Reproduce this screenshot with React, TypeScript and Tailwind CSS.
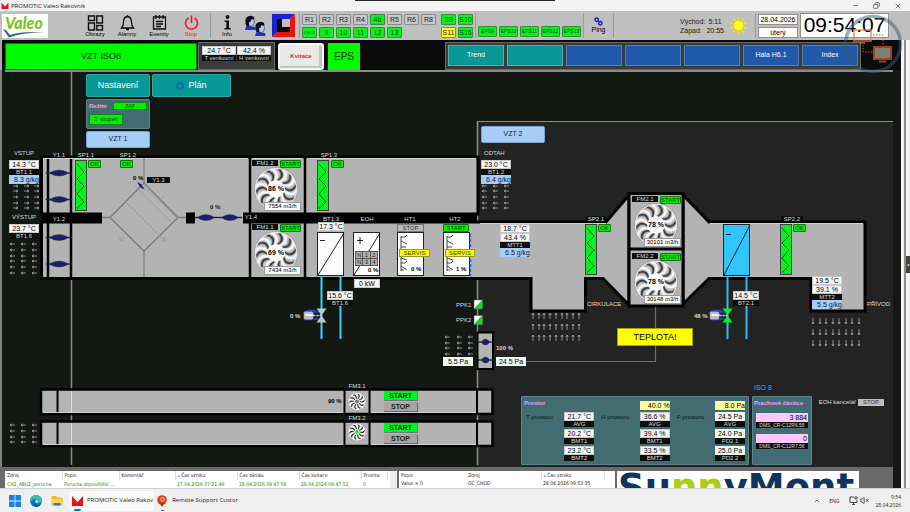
import type { ReactNode } from "react";
import clsx from "clsx";
import { ChevronUp, Copy, Minus, VolumeX, X } from "lucide-react";

type Kind = "white" | "blue" | "mint" | "yellow" | "pink" | "label";
type Item = [Kind, string];

const kindClass: Record<Kind, string> = {
  white: "h-[9px] bg-[#f6f6f6] text-black text-[7px] leading-[9px] text-center border border-[#c8c8c8]",
  blue: "h-[9px] bg-[#a6cdf5] text-[#10204a] text-[7px] leading-[9px] text-right",
  mint: "h-[9px] bg-[#effbef] text-black text-[7px] leading-[9px] text-center",
  yellow: "h-[9px] bg-[#ffff9c] text-black text-[7px] leading-[9px] text-right",
  pink: "h-[9px] bg-[#ffc8fa] text-black text-[7px] leading-[9px] text-right pr-px",
  label: "h-[6px] bg-[#0d0f0c] text-[#d8d8d8] text-[6px] leading-[6px] text-center",
};

function Readout({ items, className }: { items: Item[]; className?: string }) {
  return (
    <div className={clsx("flex flex-col whitespace-nowrap", className)}>
      {items.map(([kind, text], i) => (
        <span key={i} className={clsx("flex items-center", kind === "blue" || kind === "yellow" || kind === "pink" ? "justify-end" : "justify-center", kindClass[kind])}>
          {text}
        </span>
      ))}
    </div>
  );
}

function Tag({ className, children }: { className: string; children: ReactNode }) {
  return (
    <span className={clsx("absolute whitespace-nowrap text-center text-[6px] leading-[6px] text-[#dcdcdc]", className)}>
      {children}
    </span>
  );
}

function State({ className, children }: { className: string; children: ReactNode }) {
  return (
    <span className={clsx("flex h-[8px] items-center justify-center rounded-[1px] border border-[#0a7a0a] bg-[#00f000] text-[6px] leading-[6px] text-[#063806]", className)}>
      {children}
    </span>
  );
}

const bladeAngles = [0, 36, 72, 108, 144, 180, 216, 252, 288, 324];

function FanUnit({ className, name, speed, flow }: { className: string; name: string; speed: string; flow: string }) {
  return (
    <div className={clsx("absolute h-[51px] w-[49px]", className)}>
      <svg viewBox="-22 -22 44 44" className="absolute left-[2px] top-[7px] h-[44px] w-[44px]">
        <circle r="21.5" fill="#f7f7f7" stroke="#9a9a9a" strokeWidth="0.8" />
        {bladeAngles.map((a) => (
          <g key={a} transform={`rotate(${a})`}>
            <path d="M0 -9 C3 -12 3 -16 -2 -20.5 L6 -19.6 C10 -15 9 -11 3.5 -8 Z" fill="#c4c4c4" />
            <path d="M0.5 -9 C5 -12 5.500 -16 0.5 -20 L5 -19.6 C8.500 -15 8 -11 2.500 -8.2 Z" fill="#8a8a8a" />
            <path d="M1.5 -9 C6 -12 6 -16 2.2 -19.6 L4.2 -19.4 C8 -15 7.5 -11 2.5 -8.4 Z" fill="#3a3a3a" />
          </g>
        ))}
        <circle r="8.5" fill="#fbfbfb" />
      </svg>
      <div className="relative flex justify-between">
        <span className="h-[6px] w-[26px] bg-[#0d0f0c] text-center text-[6px] leading-[6px] text-[#dcdcdc]">{name}</span>
        <State className="w-[21px]">START</State>
      </div>
      <span className="absolute left-[2px] top-[25px] w-[44px] text-center text-[7px] font-bold leading-[8px] text-black">{speed}</span>
      <span className="absolute right-0 top-[42px] h-[9px] w-[37px] border border-[#9a9a9a] bg-[#fafafa] text-center text-[6px] leading-[7px] text-black">{flow}</span>
    </div>
  );
}

function SmallFan({ x, y, hub }: { x: number; y: number; hub: string }) {
  return (
    <g transform={`translate(${x} ${y})`}>
      <circle r="8.5" fill="#f4f4f4" />
      {bladeAngles.map((a) => (
        <path key={a} transform={`rotate(${a})`} d="M0.4 -2.8 C2 -4.5 2 -6.5 0.2 -7.6 L1.5 -7.5 C3.4 -6.5 3 -4.5 1.4 -2.5 Z" fill="#1c1c1c" />
      ))}
      <circle r="1.9" fill={hub} />
    </g>
  );
}

function Filter({ x, y }: { x: number; y: number }) {
  return (
    <g transform={`translate(${x} ${y})`}>
      <rect x="0.5" y="0.5" width="11" height="50" fill="#00f51a" stroke="#4a3a4a" />
      <path d="M2 4 L9 12 L2 19 L9 26 L2 34 L9 42 L2 48.5" fill="none" stroke="#0a4d10" strokeWidth="1" />
    </g>
  );
}

function Damper({ x, y, r = 13 }: { x: number; y: number; r?: number }) {
  return (
    <path
      transform={`translate(${x} ${y})`}
      d={`M${-r} -0.5 H${-r + 4} Q0 -5.5 ${r - 4} -0.5 H${r} V0.5 H${r - 4} Q0 5.5 ${-r + 4} 0.5 H${-r} Z`}
      fill="#1b1f6e"
      stroke="#111"
      strokeWidth="0.3"
    />
  );
}

function Valve({ x, y, color }: { x: number; y: number; color: string }) {
  return (
    <g transform={`translate(${x} ${y})`}>
      <rect x="-18" y="-4.5" width="10" height="9" rx="2" fill="#b9bbc6" stroke="#2a36b8" />
      <rect x="-16" y="-1.5" width="8" height="2" fill="#f0f0f4" />
      <path d="M-14 -5 H-6 M-8 -3.5 H-3 M-8 3.5 H-3" stroke="#2c46d8" strokeWidth="1.3" />
      <path d="M-8 0 H0" stroke="#dcdcdc" strokeWidth="1.4" strokeDasharray="2 1" />
      <path d="M-5 -7 H5 L-5 7 H5 Z" fill={color} />
    </g>
  );
}

function Arrows({ xs, ys, dir }: { xs: number[]; ys: number[]; dir: "left" | "right" | "up" | "down" }) {
  const shape = {
    left: "M0 0 H5 M2 -1.2 L0 0 L2 1.2",
    right: "M0 0 H5 M3 -1.2 L5 0 L3 1.2",
    up: "M0 0 V6 M-1.2 2 L0 0 L1.2 2",
    down: "M0 0 V6 M-1.2 4 L0 6 L1.2 4",
  }[dir];
  return (
    <g fill="none" stroke="#a6a6a6" strokeWidth="0.8">
      {ys.map((y) => xs.map((x) => <path key={`${x}-${y}`} transform={`translate(${x} ${y})`} d={shape} />))}
    </g>
  );
}

function Coil({ x }: { x: number }) {
  return (
    <g transform={`translate(${x} 232)`}>
      <rect x="0.5" y="0.5" width="26" height="43" fill="#fdfdfd" stroke="#222" />
      <path d="M4 4 V39 M4 5 H8 L10 3 M4 9 L10 12 M4 15 H9 M4 26 L10 28 M4 31 H8 L10 29 M4 34 L10 38 M4 38 H7" fill="none" stroke="#333" strokeWidth="0.9" />
    </g>
  );
}

// duct network, coordinates follow the 1:1 screen layout
function DuctDrawing() {
  return (
    <svg viewBox="0 70 893 397" width="893" height="397" className="absolute left-0 top-0">
      <path d="M1 70 V467" stroke="#a8a8a8" strokeWidth="1.5" />
      <path d="M71.5 72 V465 M477.5 121 V465" stroke="#8c8c8c" strokeWidth="1.5" />

      <g fill="#b3b3b3" stroke="#000" strokeWidth="3">
        <path d="M41.500 157 H478 V214 H41.500 Z" />
        <path d="M41.500 222 H606 L629 195 V305 L603 278.500 H585.500 V311 H531 V278.500 H41.500 Z" />
        <path d="M683 195 L709 222 H865 V311 H811 V278.500 H709 L683 304 Z" />
        <path d="M629 193.500 H683 V249 H629 Z M629 249 H683 V306 H629 Z" />
        <path d="M41 389.500 H492.500 V414 H41 Z M41 421.500 H492.500 V446 H41 Z" strokeWidth="2.500" />
        <path d="M477.500 332.500 H493 V369 H477.500 Z" strokeWidth="2" />
      </g>
      <path d="M42 213 H477 V223 H42 Z" fill="#000" />
      <path d="M102 212 H186 V224 H102 Z M195 212 H243 V224 H195 Z" fill="#b3b3b3" />
      <path d="M48 157 V278 M71 157 V278 M250 157 V278 M305 157 V278" stroke="#000" strokeWidth="2.500" />
      <path d="M57.500 390 V414 M344.500 390 V414 M369.500 390 V414 M477 390 V414 M57.500 422 V446 M344.500 422 V446 M369.500 422 V446 M477 422 V446" stroke="#000" strokeWidth="2" />
      <path d="M71.500 391 V413 M71.500 423 V445" stroke="#dedede" />
      <path d="M43 158.500 H248 M252 158.500 H303 M307 158.500 H476 M480 223.500 H606 M710 223.500 H863 M43 412.500 H343 M371 412.500 H476 M43 444.500 H343 M371 444.500 H476" stroke="#d2d2d2" />

      {/* heat recovery exchanger */}
      <g fill="none" stroke="#7c7c7c" strokeWidth="1.300">
        <path d="M144 158 V183 M144 251 V277 M102 217.500 H110 M178 217.500 H186" />
        <path d="M144 183 L178 217.500 L144 251 L110 217.500 Z" />
        <path d="M122 198 L165 241 M161 241 H165 V237 M124 237 L120 241 M120 237 V241 H124 M139 190 L171 222 M144 186 L176 217 M164 196 L160 200" stroke="#999" strokeWidth="0.900" />
      </g>
      <path d="M137 182 L141 184 L145 190 L140 187 Z" fill="#1b1f6e" />

      <Damper x={59} y={173} />
      <Damper x={59} y={199.5} />
      <Damper x={59} y={237.5} />
      <Damper x={59} y={264} />
      <Damper x={206} y={217.5} r={12} />
      <Damper x={230} y={217.5} r={12} />
      <Damper x={485.5} y={342} r={8} />
      <Damper x={485.5} y={360} r={8} />

      <Filter x={75} y={160} />
      <Filter x={317} y={160} />
      <Filter x={585} y={224} />
      <Filter x={780} y={224} />

      {/* coolers and heaters */}
      <path d="M321.500 276 V339 M340.500 276 V339" stroke="#35d3f5" strokeWidth="2" />
      <path d="M727.500 276 V339 M746.500 276 V339" stroke="#35b9f5" strokeWidth="2" />
      <g stroke="#222">
        <rect x="317.500" y="232.500" width="26" height="43" fill="#fdfdfd" />
        <path d="M318 275 L344 233 M320 240.500 H325" />
        <rect x="353.500" y="232.500" width="26" height="43" fill="#fdfdfd" />
        <path d="M354 275 L380 233 M357 240.500 H363 M360 237 V244" />
        <rect x="723.500" y="224.500" width="26" height="51" fill="#2fc5ff" />
        <path d="M724 275 L750 225 M726 234.500 H731" />
      </g>
      <Coil x={397} />
      <Coil x={443} />
      <path d="M470.500 234 V276" stroke="#2d6cf5" strokeWidth="1.500" strokeDasharray="3 2" />
      <Valve x={321.5} y={315.5} color="#c4c4c4" />
      <Valve x={727.5} y={315.5} color="#00f51a" />

      <SmallFan x={357} y={401.5} hub="#777" />
      <SmallFan x={357} y={432} hub="#00f51a" />

      <path d="M525 361.500 H655.500 V307" fill="none" stroke="#3f8d3f" strokeWidth="1.200" />
      <g stroke="#555" strokeWidth="0.500">
        <path d="M474 300 H482.500 V309 H474 Z M474 315.500 H482.500 V324.500 H474 Z" fill="#fff" />
        <path d="M482.500 300 V309 H474 Z M482.500 315.500 V324.500 H474 Z" fill="#00e51a" />
      </g>

      <Arrows dir="right" xs={[13, 24, 34]} ys={[186, 191, 197, 203, 208]} />
      <Arrows dir="left" xs={[10, 21, 32]} ys={[244, 250, 256, 261, 267, 273]} />
      <Arrows dir="left" xs={[482, 493, 504]} ys={[186, 191, 197, 203, 208]} />
      <Arrows dir="left" xs={[445, 457, 468]} ys={[337, 343, 348, 354]} />
      <Arrows dir="left" xs={[10, 21, 32]} ys={[425, 431, 437, 442]} />
      <Arrows dir="up" xs={[533, 539, 544, 550, 556, 562, 567, 573, 579]} ys={[313, 324, 335]} />
      <Arrows dir="down" xs={[813, 820, 826, 833, 839, 846, 852, 859]} ys={[318, 329, 340]} />
    </svg>
  );
}

function ToolButton({ className, label, children }: { className?: string; label: string; children: ReactNode }) {
  return (
    <button className={clsx("flex w-[32px] flex-col items-center text-[6px] leading-[7px]", className)}>
      {children}
      {label}
    </button>
  );
}

function Divider() {
  return <span className="h-[25px] w-px bg-[#9a9a9a]" />;
}

const unitRows: [string, string][][] = [
  [["R1", "n"], ["R2", "n"], ["R3", "n"], ["R4", "n"], ["4b", "g"], ["R5", "n"], ["R6", "n"], ["R8", "n"]],
  [["CHO1", "g"], ["9", "g"], ["10", "g"], ["11", "g"], ["12", "g"], ["13", "g"]],
];
const sRows: [string, string][][] = [
  [["S9", "g"], ["S10", "g"]],
  [["S11", "y"], ["S16", "g"]],
];

function Chips({ rows }: { rows: [string, string][][] }) {
  return (
    <div className="flex flex-col gap-[2px]">
      {rows.map((row, i) => (
        <div key={i} className="flex gap-[2px]">
          {row.map(([label, tone]) => (
            <button
              key={label}
              className={clsx(
                "h-[11px] w-[15px] rounded-[1px] border leading-[9px]",
                label === "CHO1" ? "text-[4px]" : "text-[7px]",
                tone === "n" && "border-[#8a8a8a] bg-[#c6c6c6] text-[#222]",
                tone === "g" && "border-[#3c8a3c] bg-[#00f51a] text-[#064806]",
                tone === "y" && "border-[#8a8a3c] bg-[#ffff1a] text-[#222]"
              )}
            >
              {label}
            </button>
          ))}
        </div>
      ))}
    </div>
  );
}

function Face({ x, y }: { x: number; y: number }) {
  return (
    <g transform={`translate(${x} ${y})`}>
      <path d="M0 14 L1 10.500 L4 9 L7 10.500 L10 11 L10.500 14 Z" fill="#1e2fd0" />
      <path d="M3 2 H8.500 L9.500 6 L8.500 9.500 L6.500 10.500 L4 10 Z" fill="#b9c6ee" stroke="#14142a" strokeWidth="0.500" />
      <path d="M1.500 10 Q-1 5 1.500 1.500 Q5 -1.500 9 1 Q9.800 2.500 9 3.500 L6 3.500 L5.500 6 L4 6 L4.200 10 Z" fill="#0b0b18" />
    </g>
  );
}

function Toolbar() {
  return (
    <header className="flex h-[29px] items-center bg-[#bfbfbf] pl-[2px] pr-[21px] text-black">
      <div className="relative h-[24px] w-[46px] bg-white">
        <span className="absolute left-[3px] top-0 text-[16px] font-black italic leading-[17px] text-[#7ac31e] [font-family:'Lato',sans-serif]">Valeo</span>
        <svg viewBox="0 0 46 24" className="absolute inset-0">
          <path d="M1 15 L4 16 L8 21 Q20 17 43 18.500 Q22 18 7 23.500 Z" fill="#35607c" />
        </svg>
      </div>
      <ToolButton className="ml-[31px]" label="Obrazy">
        <svg viewBox="0 0 17 17" className="h-[17px] w-[17px]" fill="none" stroke="#111" strokeWidth="1.400">
          <path d="M1.500 2 H7.500 V6.500 H1.500 Z M1.500 9 H7.500 V16 H1.500 Z M9.800 2 H15.500 V9 H9.800 Z M9.800 11.500 H15.500 V16 H9.800 Z" />
        </svg>
      </ToolButton>
      <ToolButton label="Alarmy">
        <svg viewBox="0 0 17 17" className="h-[17px] w-[17px]" fill="none" stroke="#111" strokeWidth="1.300">
          <path d="M2.500 14 Q4.500 12 4.500 8 Q4.500 3 8.500 2.500 Q12.500 3 12.500 8 Q12.500 12 14.500 14 Z M8.500 1 V2.500 M7 15.500 H10" />
        </svg>
      </ToolButton>
      <ToolButton label="Evenity">
        <svg viewBox="0 0 17 17" className="h-[17px] w-[17px]" fill="none" stroke="#111" strokeWidth="1.300">
          <path d="M2.500 3 H14.500 V15 H2.500 Z M5 1 V5 M8.500 1 V5 M12 1 V5 M5 7.500 H12 M5 10 H12 M5 12.500 H10" />
        </svg>
      </ToolButton>
      <ToolButton className="text-[#f01818]" label="Stop">
        <svg viewBox="0 0 17 17" className="h-[17px] w-[17px]" fill="none" stroke="#f01818" strokeWidth="1.600">
          <path d="M5.500 4 A6 6 0 1 0 11.500 4 M8.500 1.500 V9" />
        </svg>
      </ToolButton>
      <span className="ml-[3px] flex"><Divider /></span>
      <ToolButton label="Info">
        <svg viewBox="0 0 17 17" className="h-[17px] w-[17px]" fill="#111">
          <circle cx="8.500" cy="3" r="1.900" />
          <path d="M5.500 6.500 H10 V14 H11.800 V15.500 H5.500 V14 H7.300 V8 H5.500 Z" />
        </svg>
      </ToolButton>
      <button aria-label="Users" className="ml-px">
        <svg viewBox="0 0 22 23" className="h-[23px] w-[22px]">
          <Face x={1} y={2} />
          <Face x={11} y={8} />
        </svg>
      </button>
      <button aria-label="Home" className="ml-[6px]">
        <svg viewBox="0 0 23 23" className="h-[23px] w-[23px]">
          <path d="M0 0 H23 L17 6 H6 V17 L0 23 Z" fill="#1a22cf" />
          <path d="M23 0 V23 H0 L6 17 H17 V6 Z" fill="#ee1111" />
          <path d="M5 5 H18 V18 H5 Z" fill="#050505" />
          <path d="M10 5 H18 V13 H10 Z" fill="#bfbfbf" />
        </svg>
      </button>
      <span className="ml-[4px] mr-[2px] flex"><Divider /></span>
      <Chips rows={unitRows} />
      <span className="ml-[5px] mr-[2px] flex"><Chips rows={sRows} /></span>
      <Divider />
      <div className="ml-[2px] mr-[2px] flex gap-[2px] self-end pb-[3px]">
        {["EPS9", "EPS10", "EPS11", "EPS12", "EPS13"].map((label) => (
          <button key={label} className="h-[11px] w-[19px] rounded-[1px] border border-[#3c8a3c] bg-[#00f51a] text-[5px] leading-[9px] text-[#064806]">
            {label}
          </button>
        ))}
      </div>
      <Divider />
      <button className="flex w-[29px] flex-col items-center text-[7px] leading-[8px]">
        <svg viewBox="0 0 10 10" className="h-[9px] w-[9px]" fill="none" stroke="#1818d0" strokeWidth="1.600">
          <circle cx="3" cy="3" r="1.900" />
          <circle cx="7" cy="7" r="1.900" />
        </svg>
        Ping
      </button>
      <Divider />
      <div className="ml-auto grid grid-cols-[26px_18px] text-[7px] leading-[9px] text-[#222]">
        <span>Východ:</span>
        <span className="text-center">5:11</span>
        <span>Západ:</span>
        <span className="text-right">20:55</span>
      </div>
      <svg viewBox="-10 -10 20 20" className="ml-[5px] mr-[7px] h-[19px] w-[19px]">
        <g stroke="#f3e713" strokeWidth="1.500">
          {bladeAngles.map((a) => (
            <path key={a} transform={`rotate(${a})`} d="M0 -6 V-9" />
          ))}
        </g>
        <circle r="5.500" fill="#ffff10" stroke="#b5ae3a" strokeWidth="0.500" />
      </svg>
      <Divider />
      <div className="ml-[2px] mr-[2px] flex w-[40px] flex-col gap-[2px] text-center text-[7px] leading-[9px]">
        <span className="h-[11px] border border-[#8f8f8f] bg-white">28.04.2026</span>
        <span className="h-[11px] border border-[#8f8f8f] bg-white">úterý</span>
      </div>
      <time className="h-[25px] w-[89px] border border-[#8f8f8f] bg-white text-center text-[21px] leading-[21px]">09:54:07</time>
    </header>
  );
}

const navItems = ["Trend", "", "", "", "", "Hala H6.1", "Index"];

function StatusRow() {
  return (
    <div className="flex h-[30px] items-end bg-[#0a0b0a] pr-[40px]">
      <h1 className="ml-[3px] flex h-[27px] w-[192px] items-center justify-center border border-[#146b14] bg-[#00fa00] text-[9px] text-[#062806]">VZT ISO8</h1>
      <div className="ml-px flex h-[28px] w-[77px] items-start gap-px border border-[#686868] bg-[#3b3b3b] px-[3px] pt-[3px]">
        <Readout className="w-[36px]" items={[["white", "24.7 °C"], ["label", "T venkovní"]]} />
        <Readout className="w-[36px]" items={[["white", "42.4 %"], ["label", "H venkovní"]]} />
      </div>
      <button className="ml-[3px] h-[27px] w-[46px] rounded-[3px] border-2 border-[#f8f8f8] bg-[#e9e9e9] text-[6px] font-bold text-[#ee2020] shadow-[inset_-3px_-2px_0_#c4c4c4]">Kvitace</button>
      <button className="ml-[4px] h-[27px] w-[32px] bg-[#00fa00] text-[10px] font-medium text-[#062806]">EPS</button>
      <nav className="ml-auto flex h-[28px] gap-[3px] border border-[#686868] bg-[#3b3b3b] px-[2px] pt-[2px]">
        {navItems.map((label, i) => (
          <button
            key={i}
            aria-label={label || `Page ${i + 1}`}
            className={clsx(
              "h-[21px] w-[56px] border text-[7px] text-white",
              i < 2 ? "border-[#5aaeac] bg-[#089896]" : "border-[#5a7fae] bg-[#2058ab]"
            )}
          >
            {label}
          </button>
        ))}
      </nav>
    </div>
  );
}

function MotorButtons({ className }: { className: string }) {
  return (
    <div className={clsx("absolute flex w-[34px] flex-col gap-px text-[7px] font-bold leading-[9px]", className)}>
      <button className="h-[10px] border-b border-r border-[#777] bg-[#00f51a] text-[#052c05]">START</button>
      <button className="h-[10px] border-b border-r border-[#666] bg-[#a6a6a6] text-[#222]">STOP</button>
    </div>
  );
}

function PaneCell({ label, target, items }: { label: string; target?: Item; items: Item[] }) {
  return (
    <div className="flex w-[76px] justify-between pr-[3px]">
      <span className="pl-[4px] pt-[16px] text-[6px] leading-[8px] text-[#0c1718]">{label}</span>
      <div className="flex w-[30px] flex-col gap-[2px] pt-[4px]">
        {target ? <Readout items={[target]} /> : <span className="h-[9px]" />}
        <Readout items={items.slice(0, 2)} />
        <Readout items={items.slice(2, 4)} />
        <Readout items={items.slice(4, 6)} />
      </div>
    </div>
  );
}

function Diagram() {
  return (
    <main className="relative h-[397px] overflow-hidden bg-[#141813]">
      <div className="absolute bottom-0 left-[477px] right-[8px] top-[51px] border-t border-[#8c8c8c] bg-[#232323]" />
      <DuctDrawing />
      <div className="relative ml-[5px] mr-[8px] h-[2px] bg-[#8a8a8a]" />

      <div className="relative flex w-[240px] flex-col gap-[2px] pl-[86px] pt-[2px]">
        <div className="flex gap-[2px]">
          <button className="h-[23px] w-[64px] shrink-0 rounded-[2px] border border-[#2fa9a6] bg-[#089896] text-[9px] text-white">Nastavení</button>
          <button className="flex h-[23px] w-[79px] shrink-0 items-center justify-center gap-[4px] rounded-[2px] border border-[#2fa9a6] bg-[#089896] text-[9px] text-white">
            <span className="h-[8px] w-[8px] rounded-full border-2 border-[#0a6fb0]" />
            Plán
          </button>
        </div>
        <div className="h-[30px] w-[64px] rounded-[2px] border border-[#5b858a] bg-[#416d72] px-[2px] pt-[2px] text-[6px] leading-[7px]">
          <div className="flex items-center justify-between">
            <span className="font-bold text-[#f19cf5]">Režim</span>
            <button className="h-[8px] w-[34px] border border-[#1b7d1b] bg-[#00f000] text-[5px] leading-[6px] text-[#053805]">ZAP</button>
          </div>
          <button className="mt-[4px] block h-[11px] w-[34px] border border-[#1b7d1b] bg-[#00f000] text-[#053805]">2. stupeň</button>
        </div>
        <button className="h-[17px] w-[64px] rounded-[2px] border border-[#7ba7d8] bg-[#a6cdf5] text-[7px] text-[#15233c]">VZT 1</button>
      </div>
      <button className="absolute left-[481px] top-[56px] h-[17px] w-[64px] rounded-[2px] border border-[#7ba7d8] bg-[#a6cdf5] text-[7px] text-[#15233c]">VZT 2</button>

      {/* sensors */}
      <Readout className="absolute left-[9px] top-[90px] w-[30px]" items={[["white", "14.3 °C"], ["label", "BT1.1"], ["blue", "8.3 g/kg"]]} />
      <Readout className="absolute left-[9px] top-[154px] w-[30px]" items={[["white", "23.7 °C"], ["label", "BT1.6"]]} />
      <Readout className="absolute left-[481px] top-[90px] w-[30px]" items={[["white", "23.0 °C"], ["label", "BT1.2"], ["blue", "6.4 g/kg"]]} />
      <Readout className="absolute left-[500px] top-[154px] w-[30px]" items={[["white", "18.7 °C"], ["white", "43.4 %"], ["label", "MTT1"], ["blue", "6.5 g/kg"]]} />
      <Readout className="absolute left-[812px] top-[206px] w-[30px]" items={[["white", "19.5 °C"], ["white", "39.1 %"], ["label", "MTT2"], ["blue", "5.5 g/kg"]]} />
      <Readout className="absolute left-[318px] top-[146px] w-[26px]" items={[["label", "BT1.3"], ["white", "17.3 °C"]]} />
      <Readout className="absolute left-[327px] top-[221px] w-[26px]" items={[["white", "15.6 °C"], ["label", "BT1.6"]]} />
      <Readout className="absolute left-[733px] top-[221px] w-[26px]" items={[["white", "14.5 °C"], ["label", "BT2.1"]]} />
      <Readout className="absolute left-[354px] top-[209px] w-[26px]" items={[["white", "0 kW"]]} />
      <Readout className="absolute left-[443px] top-[287px] w-[30px]" items={[["mint", "5.5 Pa"]]} />
      <Readout className="absolute left-[496px] top-[287px] w-[30px]" items={[["mint", "24.5 Pa"]]} />

      <Tag className="left-[9px] top-[80px] w-[30px]">VSTUP</Tag>
      <Tag className="left-[9px] top-[144px] w-[30px]">VÝSTUP</Tag>
      <Tag className="left-[484px] top-[80px]">ODTAH</Tag>
      <Tag className="left-[49px] top-[82px] w-[20px]">Y1.1</Tag>
      <Tag className="left-[49px] top-[146px] w-[20px]">Y1.2</Tag>
      <Tag className="left-[76px] top-[82px] w-[20px]">SP1.1</Tag>
      <Tag className="left-[118px] top-[82px] w-[20px]">SP1.2</Tag>
      <Tag className="left-[319px] top-[82px] w-[20px]">SP1.3</Tag>
      <Tag className="left-[147px] top-[107px] w-[23px] bg-[#0d0f0c]">Y1.3</Tag>
      <Tag className="left-[241px] top-[144px] w-[20px]">Y1.4</Tag>
      <Tag className="left-[357px] top-[146px] w-[20px]">EOH</Tag>
      <Tag className="left-[400px] top-[146px] w-[20px]">HT1</Tag>
      <Tag className="left-[445px] top-[146px] w-[20px]">HT2</Tag>
      <Tag className="left-[586px] top-[146px] w-[20px] bg-[#0d0f0c]">SP2.1</Tag>
      <Tag className="left-[781px] top-[146px] w-[22px] bg-[#0d0f0c]">SP2.2</Tag>
      <Tag className="left-[587px] top-[231px]">CIRKULACE</Tag>
      <Tag className="left-[867px] top-[231px]">PŘÍVOD</Tag>
      <Tag className="left-[456px] top-[232px]">PPK1</Tag>
      <Tag className="left-[456px] top-[247px]">PPK2</Tag>
      <Tag className="left-[496px] top-[275px] font-bold">100 %</Tag>
      <Tag className="left-[290px] top-[243px] font-bold">0 %</Tag>
      <Tag className="left-[694px] top-[243px] font-bold">48 %</Tag>
      <Tag className="left-[347px] top-[313px] w-[20px]">FM3.1</Tag>
      <Tag className="left-[347px] top-[345px] w-[20px]">FM3.2</Tag>
      <span className="absolute left-[133px] top-[105px] text-[6px] font-bold leading-[6px] text-black">0 %</span>
      <span className="absolute left-[210px] top-[134px] text-[6px] font-bold leading-[6px] text-[#222]">0 %</span>
      <span className="absolute left-[328px] top-[328px] text-[6px] font-bold leading-[6px] text-black">90 %</span>
      <span className="absolute left-[368px] top-[197px] text-[6px] font-bold leading-[6px] text-black">0 %</span>
      <span className="absolute left-[411px] top-[196px] text-[6px] font-bold leading-[6px] text-black">0 %</span>
      <span className="absolute left-[456px] top-[196px] text-[6px] font-bold leading-[6px] text-black">1 %</span>

      <State className="absolute left-[88px] top-[90px] w-[13px]">OK</State>
      <State className="absolute left-[120px] top-[90px] w-[13px]">OK</State>
      <State className="absolute left-[331px] top-[90px] w-[13px]">OK</State>
      <State className="absolute left-[598px] top-[154px] w-[13px]">OK</State>
      <State className="absolute left-[793px] top-[154px] w-[13px]">OK</State>

      <FanUnit className="left-[252px] top-[90px]" name="FM1.2" speed="86 %" flow="7554 m3/h" />
      <FanUnit className="left-[252px] top-[154px]" name="FM1.1" speed="69 %" flow="7434 m3/h" />
      <FanUnit className="left-[632px] top-[126px]" name="FM2.1" speed="78 %" flow="30101 m3/h" />
      <FanUnit className="left-[632px] top-[183px]" name="FM2.2" speed="78 %" flow="30148 m3/h" />

      <div className="absolute left-[355px] top-[181px] grid w-[23px] grid-cols-3 gap-px bg-[#555] p-px text-center text-[6px] leading-[6px] text-[#222]">
        {["N", "1", "2", "N", "3", "4"].map((c, i) => (
          <span key={i} className="bg-[#b0b0b0]">{c}</span>
        ))}
      </div>
      <span className="absolute left-[397px] top-[154px] h-[8px] w-[27px] border border-[#777] bg-[#b9b9b9] text-center text-[6px] leading-[6px] text-[#333]">STOP</span>
      <State className="absolute left-[443px] top-[154px] w-[26px]">START</State>
      <span className="absolute left-[399px] top-[179px] h-[8px] w-[31px] border border-[#9a9a20] bg-[#ffff00] text-center text-[6px] leading-[6px] text-[#333]">SERVIS</span>
      <span className="absolute left-[445px] top-[179px] h-[8px] w-[30px] border border-[#9a9a20] bg-[#ffff00] text-center text-[6px] leading-[6px] text-[#333]">SERVIS</span>
      <span className="absolute left-[617px] top-[258px] h-[18px] w-[76px] border border-[#a0a000] bg-[#ffff00] text-center text-[9px] leading-[16px] text-black">TEPLOTA!</span>

      <MotorButtons className="left-[384px] top-[321px]" />
      <MotorButtons className="left-[384px] top-[353px]" />

      {/* room values */}
      <section className="absolute left-[521px] top-[326px] h-[69px] w-[228px] rounded-[1px] border border-[#5b858a] bg-[#416d72]">
        <h2 className="absolute left-[2px] top-[2px] text-[6px] font-bold leading-[8px] text-[#f19cf5]">Prostor</h2>
        <div className="flex">
          <PaneCell label="T prostoru" items={[["white", "21.7 °C"], ["label", "AVG"], ["white", "20.2 °C"], ["label", "BMT1"], ["white", "23.2 °C"], ["label", "BMT2"]]} />
          <PaneCell label="H prostoru" target={["yellow", "40.0 %"]} items={[["white", "36.6 %"], ["label", "AVG"], ["white", "39.4 %"], ["label", "BMT1"], ["white", "33.5 %"], ["label", "BMT2"]]} />
          <PaneCell label="P prostoru" target={["yellow", "8.0 Pa"]} items={[["mint", "24.5 Pa"], ["label", "AVG"], ["mint", "24.0 Pa"], ["label", "PD2.1"], ["mint", "25.0 Pa"], ["label", "PD2.2"]]} />
        </div>
      </section>
      <span className="absolute left-[754px] top-[314px] text-[7px] leading-[8px] text-[#35b4e0]">ISO 8</span>
      <section className="absolute left-[752px] top-[326px] flex h-[69px] w-[60px] flex-col gap-[6px] rounded-[1px] border border-[#5b858a] bg-[#416d72] px-[3px] pt-[2px]">
        <h2 className="-mx-[2px] whitespace-nowrap text-[6px] font-bold leading-[8px] text-[#f19cf5]">Prachové částice</h2>
        <div className="flex flex-col">
          <Readout items={[["pink", "3 884"]]} />
          <span className="h-[6px] whitespace-nowrap bg-[#0d0f0c] text-center text-[5px] leading-[6px] text-[#dcdcdc]">DMS_CR-C12R6.56</span>
        </div>
        <div className="flex flex-col">
          <Readout items={[["pink", "0"]]} />
          <span className="h-[6px] whitespace-nowrap bg-[#0d0f0c] text-center text-[5px] leading-[6px] text-[#dcdcdc]">DMS_CR-C12R7.56</span>
        </div>
      </section>
      <div className="absolute right-[17px] top-[329px] flex items-center gap-[2px] text-[6px] leading-[7px] text-[#dcdcdc]">
        EOH kancelář
        <button className="h-[7px] w-[26px] bg-[#bdbdbd] text-[6px] leading-[7px] text-[#333]">STOP</button>
      </div>
    </main>
  );
}

function AlarmBar() {
  return (
    <div className="mr-[8px] flex h-[21px] gap-[2px] overflow-hidden bg-[#6a6a6a] pl-[3px] pt-[4px] text-[5px] leading-[7px] [font-family:'DejaVu_Sans_Condensed','Liberation_Sans',sans-serif]">
      <div className="flex w-[392px] shrink-0 bg-white">
        <table className="w-[383px] table-fixed text-left">
          <thead>
            <tr className="h-[9px] text-[#222]">
              <th className="w-[57px] border-r border-[#ddd] pl-[2px] font-normal">Zdroj</th>
              <th className="w-[57px] border-r border-[#ddd] pl-[2px] font-normal">Popis</th>
              <th className="w-[56px] border-r border-[#ddd] pl-[2px] font-normal">Komentář</th>
              <th className="w-[62px] border-r border-[#ddd] pl-[2px] font-normal">▵ Čas vzniku</th>
              <th className="w-[62px] border-r border-[#ddd] pl-[2px] font-normal">Čas zániku</th>
              <th className="w-[62px] border-r border-[#ddd] pl-[2px] font-normal">Čas kvitace</th>
              <th className="border-r border-[#ddd] pl-[2px] font-normal">Priorita</th>
            </tr>
          </thead>
          <tbody>
            <tr className="whitespace-nowrap text-[#128a12]">
              <td className="pl-[2px]">CH2_ABU2_porucha</td>
              <td className="pl-[2px]">Porucha dopouštění ...</td>
              <td />
              <td className="pl-[2px]">27.04.2026 07:21:49</td>
              <td className="pl-[2px]">28.04.2026 09:47:56</td>
              <td className="pl-[2px]">28.04.2026 09:47:52</td>
              <td className="pl-[2px]">0</td>
            </tr>
          </tbody>
        </table>
        <span className="ml-auto w-[7px] bg-[#ececec]" />
      </div>
      <div className="w-[216px] shrink-0 bg-white">
        <table className="w-[206px] table-fixed text-left">
          <thead>
            <tr className="h-[9px] text-[#222]">
              <th className="w-[67px] pl-[2px] font-normal">Popis</th>
              <th className="w-[75px] border-r border-[#ddd] pl-[2px] font-normal">Zdroj</th>
              <th className="border-r border-[#ddd] pl-[2px] font-normal">▵ Čas vzniku</th>
            </tr>
          </thead>
          <tbody>
            <tr className="whitespace-nowrap text-[#222]">
              <td className="pl-[2px]">Value = 0</td>
              <td className="pl-[2px]">OC_CHOD</td>
              <td className="pl-[2px]">28.04.2026 09:53:35</td>
            </tr>
          </tbody>
        </table>
      </div>
      <div className="h-[17px] w-[242px] shrink-0 overflow-hidden bg-white pl-px text-[37px] font-bold leading-[42px] text-[#0f3460] [font-family:'DejaVu_Sans',sans-serif]">
        <p className="-mt-[4px]">
          Su<span className="text-[#b0cc10]">nn</span>yMont
        </p>
      </div>
    </div>
  );
}

function PromoticMark({ className }: { className: string }) {
  return (
    <svg viewBox="0 0 12 12" className={className}>
      <path d="M0 1 L6 7.500 L12 1 V12 H0 Z" fill="#e8141c" />
    </svg>
  );
}

function Taskbar() {
  return (
    <footer className="flex h-[24px] items-center border-t border-[#cfcfcf] bg-[#efefef] pl-[9px] pr-[9px] text-[6px] text-[#222] [font-family:'Open_Sans',sans-serif]">
      <button aria-label="Start">
        <svg viewBox="0 0 12 12" className="h-[12px] w-[12px]">
          <path d="M0 0 H5.600 V5.600 H0 Z M6.400 0 H12 V5.600 H6.400 Z M0 6.400 H5.600 V12 H0 Z M6.400 6.400 H12 V12 H6.400 Z" fill="#1583dc" />
        </svg>
      </button>
      <button aria-label="Edge" className="ml-[9px]">
        <svg viewBox="0 0 12 12" className="h-[12px] w-[12px]">
          <circle cx="6" cy="6" r="6" fill="#1377cc" />
          <path d="M0.300 5 Q2 0 6.500 0 Q12 0.500 12 5.500 Q11.500 8 8 7.700 Q8.500 3.500 4.500 4 Q1.500 4 0.300 7 Z" fill="#38c1b0" />
          <path d="M4.500 6 Q4 10 8 10 Q10 10 11 9 Q9 12.500 5.500 11.500 Q2.500 9.500 4.500 6 Z" fill="#0a4f9e" />
          <path d="M5.200 6 Q6 4.500 7.600 5.500 Q8 7 7.600 8 Q5.500 8.500 5.200 6 Z" fill="#efefef" />
        </svg>
      </button>
      <button aria-label="Files" className="ml-[9px]">
        <svg viewBox="0 0 12 12" className="h-[12px] w-[12px]">
          <path d="M0.500 1 H5 L6 2.500 H11.500 V10.500 H0.500 Z" fill="#f0b429" />
          <path d="M0.500 4 H11.500 V10.500 H0.500 Z" fill="#fbd252" />
          <path d="M2.500 8 H9.500 V10.500 H2.500 Z" fill="#2a7fd4" />
        </svg>
      </button>
      <button className="relative ml-[6px] flex h-[20px] items-center gap-[4px] rounded-[2px] bg-[#fafafa] pl-[3px] pr-px">
        <PromoticMark className="h-[11px] w-[11px] shrink-0" />
        <span className="whitespace-nowrap">PROMOTIC Valeo Rakov</span>
        <span className="absolute bottom-0 left-[5px] h-[2px] w-[7px] rounded-full bg-[#1671c9]" />
      </button>
      <button className="relative ml-[3px] flex h-[20px] items-center gap-[5px]">
        <svg viewBox="0 0 10 12" className="h-[12px] w-[10px]">
          <circle cx="5" cy="5" r="4.800" fill="#d8451c" />
          <path d="M5 12 L2.500 8 H7.500 Z" fill="#a83212" />
          <circle cx="5.500" cy="4.500" r="1.800" fill="none" stroke="#f7d5c8" strokeWidth="0.900" />
        </svg>
        Remote Support Custor
        <span className="absolute bottom-0 left-[4px] h-px w-[3px] bg-[#666]" />
      </button>
      <div className="ml-auto flex items-center">
        <ChevronUp className="h-[8px] w-[8px]" />
        <span className="ml-[8px] text-[5px] leading-[6px]">ENG</span>
        <svg viewBox="0 0 9 9" className="ml-[9px] h-[9px] w-[9px]" fill="none" stroke="#333" strokeWidth="0.900">
          <path d="M5 1 H1 V6.500 H8 V4 M3 8.500 H6 M4.500 6.500 V8.500" />
          <circle cx="7" cy="2" r="1.200" />
        </svg>
        <VolumeX className="ml-[2px] h-[9px] w-[9px]" />
        <span className="ml-[7px] text-right text-[5px] leading-[8px]">
          9:54
          <br />
          28.04.2026
        </span>
      </div>
    </footer>
  );
}

function RemoteBadge() {
  return (
    <svg viewBox="0 0 60 60" className="pointer-events-none absolute right-[7px] top-[14px] h-[60px] w-[60px]">
      <circle cx="30" cy="30" r="27.500" fill="none" stroke="#3c5a72" strokeOpacity="0.500" strokeWidth="3.500" />
      <path d="M11 16 H28 V27 H11 Z M17 29 H22" fill="none" stroke="#f0763a" strokeOpacity="0.800" strokeWidth="1.500" />
      <path d="M30 21 H40 V31 M20 31 V38 H31" fill="none" stroke="#d9541a" strokeWidth="1" strokeDasharray="1.500 1.500" />
      <path d="M31 33 H48 V45 H31 Z" fill="#7f7f7f" stroke="#a8400f" strokeWidth="2" />
      <path d="M36 47.500 H43" stroke="#a8400f" strokeWidth="2" />
    </svg>
  );
}

export default function App() {
  return (
    <div className="relative flex min-h-screen w-full flex-col overflow-hidden bg-[#efefef] [font-family:'Liberation_Sans',Arial,sans-serif]">
      <div className="relative flex h-[11px] items-center gap-[2px] bg-[#f3f3f3] pl-px pr-[8px] text-[6px] leading-[8px] text-[#222]">
        <PromoticMark className="h-[7px] w-[8px]" />
        <span className="[font-family:'Open_Sans',sans-serif]">PROMOTIC Valeo Rakovník</span>
        <span className="absolute inset-x-0 top-0 mx-auto h-px w-[200px] bg-[#222]" />
        <div className="ml-auto flex gap-[14px]">
          <button aria-label="Minimize"><Minus className="h-[7px] w-[7px]" /></button>
          <button aria-label="Restore"><Copy className="h-[7px] w-[7px] -scale-x-100" /></button>
          <button aria-label="Close"><X className="h-[8px] w-[8px]" /></button>
        </div>
      </div>
      <Toolbar />
      <div className="flex">
        <div className="min-w-0 flex-1 bg-[#141813]">
          <div className="border-l-2 border-[#a8a8a8]">
            <StatusRow />
          </div>
          <Diagram />
          <div className="border-l-2 border-[#6a6a6a]">
            <AlarmBar />
          </div>
        </div>
        <div className="flex w-[9px] items-center justify-end bg-[#f3f3f3]">
          <div className="flex h-full w-[6px] items-center border-l-2 border-[#8f8f8f]">
            <button aria-label="Toggle panel" className="h-[17px] w-[4px] bg-[#444] text-[4px] leading-[17px] text-white">◂</button>
          </div>
        </div>
      </div>
      <Taskbar />
      <RemoteBadge />
    </div>
  );
}
